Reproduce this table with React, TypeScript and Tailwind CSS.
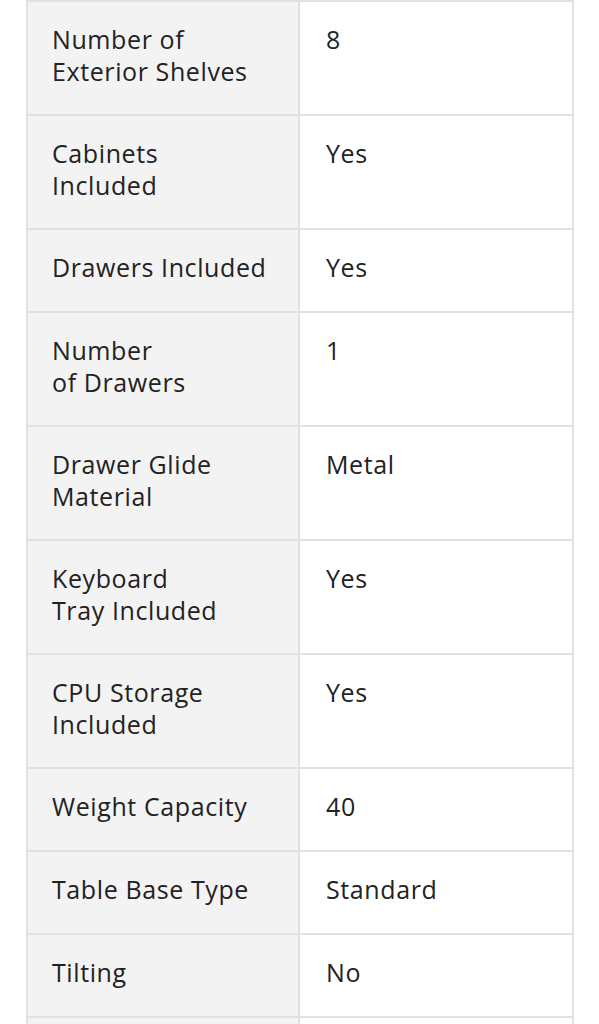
const specs: { label: string; value: string }[] = [
  { label: 'Number of\nExterior Shelves', value: '8' },
  { label: 'Cabinets\nIncluded', value: 'Yes' },
  { label: 'Drawers Included', value: 'Yes' },
  { label: 'Number\nof Drawers', value: '1' },
  { label: 'Drawer Glide\nMaterial', value: 'Metal' },
  { label: 'Keyboard\nTray Included', value: 'Yes' },
  { label: 'CPU Storage\nIncluded', value: 'Yes' },
  { label: 'Weight Capacity', value: '40' },
  { label: 'Table Base Type', value: 'Standard' },
  { label: 'Tilting', value: 'No' },
  { label: 'Adjustable Height', value: 'No' },
]

export default function App() {
  return (
    <div className="min-h-screen bg-white pl-[26px] pr-[25px] font-['Open_Sans','Liberation_Sans',sans-serif] text-[25px] leading-[32px] tracking-[0.6px] text-[#222222]">
      <div className="border-x-2 border-t-2 border-[#e1e1e3]">
        {specs.map((s) => (
          <div key={s.label} className="grid min-h-[83px] grid-cols-[270px_1fr] border-b-2 border-[#e1e1e3]">
            <div className="whitespace-pre-line bg-[#f3f3f4] px-[24px] pt-[21px] pb-[27px]">{s.label}</div>
            <div className="border-l-2 border-[#e1e1e3] px-[26px] pt-[21px] pb-[27px]">{s.value}</div>
          </div>
        ))}
      </div>
    </div>
  )
}
